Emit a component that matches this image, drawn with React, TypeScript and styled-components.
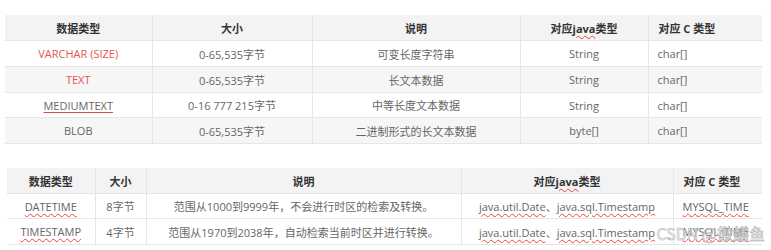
import { createGlobalStyle, styled } from 'styled-components';

const GlobalStyle = createGlobalStyle`
  html, body {
    margin: 0;
    padding: 0;
    background: #ffffff;
  }
  body {
    font-family: "Open Sans", "Noto Sans CJK SC", sans-serif;
  }
`

const Page = styled.div`
  position: relative;
  width: 771px;
  height: 250px;
  padding: 15px 9px 0 5px;
  box-sizing: border-box;
  display: flex;
  flex-direction: column;
  gap: 24px;
  overflow: hidden;
`

const Table = styled.table<{ $width: number; $indent?: number }>`
  width: ${p => p.$width}px;
  margin-left: ${p => p.$indent || 0}px;
  border-collapse: collapse;
  table-layout: fixed;
  font-size: 11px;
  color: #666;
`

const HeadCell = styled.th<{ $left?: boolean }>`
  height: 25px;
  padding: 0 0 0 ${p => (p.$left ? '10px' : '0')};
  background: #f3f3f3;
  color: #333;
  font-weight: 700;
  text-align: ${p => (p.$left ? 'left' : 'center')};
  border-left: 1px solid #e6e6e6;
  border-bottom: 1px solid #e6e6e6;
  &:first-child {
    border-left: none;
  }
`

const Row = styled.tr<{ $shade?: boolean }>`
  background: ${p => (p.$shade ? '#f6f6f6' : '#ffffff')};
`

const Cell = styled.td<{ $left?: boolean; $h?: number }>`
  height: ${p => p.$h || 25}px;
  padding: 0 0 0 ${p => (p.$left ? '9px' : '0')};
  text-align: ${p => (p.$left ? 'left' : 'center')};
  border-left: 1px solid #e6e6e6;
  border-bottom: 1px solid #e6e6e6;
  white-space: nowrap;
  &:first-child {
    border-left: none;
  }
`

const Red = styled.span`
  color: #e4574f;
`

const Spell = styled.span<{ $straight?: boolean }>`
  text-decoration-line: underline;
  text-decoration-style: ${p => (p.$straight ? 'solid' : 'wavy')};
  text-decoration-color: #e8453c;
  text-decoration-thickness: 1px;
  text-underline-offset: 2px;
`

const Watermark = styled.div`
  position: absolute;
  right: 6px;
  bottom: 5px;
  font-family: "Noto Sans CJK SC", sans-serif;
  font-size: 16px;
  color: rgba(255, 255, 255, 0.8);
  -webkit-text-stroke: 0.5px #a0a0a0;
`

const types = [
  { name: 'VARCHAR (SIZE)', red: true, size: '0-65,535字节', desc: '可变长度字符串', java: 'String', h: 25 },
  { name: 'TEXT', red: true, size: '0-65,535字节', desc: '长文本数据', java: 'String', h: 25 },
  { name: 'MEDIUMTEXT', spell: true, size: '0-16 777 215字节', desc: '中等长度文本数据', java: 'String', h: 24 },
  { name: 'BLOB', size: '0-65,535字节', desc: '二进制形式的长文本数据', java: 'byte[]', h: 25 },
]

const times = [
  { name: 'DATETIME', size: '8字节', desc: '范围从1000到9999年，不会进行时区的检索及转换。', h: 24 },
  { name: 'TIMESTAMP', size: '4字节', desc: '范围从1970到2038年，自动检索当前时区并进行转换。', h: 25 },
]

function App() {
  return (
    <Page>
      <GlobalStyle />
      <Table $width={757}>
        <colgroup>
          <col style={{ width: 147 }} />
          <col style={{ width: 160 }} />
          <col style={{ width: 208 }} />
          <col style={{ width: 128 }} />
          <col style={{ width: 114 }} />
        </colgroup>
        <thead>
          <tr>
            <HeadCell>数据类型</HeadCell>
            <HeadCell>大小</HeadCell>
            <HeadCell>说明</HeadCell>
            <HeadCell>对应<Spell>java</Spell>类型</HeadCell>
            <HeadCell $left>对应 C 类型</HeadCell>
          </tr>
        </thead>
        <tbody>
          {types.map((t, i) => (
            <Row key={t.name} $shade={i % 2 === 1}>
              <Cell $h={t.h}>
                {t.red ? <Red>{t.name}</Red> : t.spell ? <Spell $straight>{t.name}</Spell> : t.name}
              </Cell>
              <Cell $h={t.h}>{t.size}</Cell>
              <Cell $h={t.h}>{t.desc}</Cell>
              <Cell $h={t.h}>{t.java}</Cell>
              <Cell $h={t.h} $left>char[]</Cell>
            </Row>
          ))}
        </tbody>
      </Table>

      <Table $width={755} $indent={2}>
        <colgroup>
          <col style={{ width: 88 }} />
          <col style={{ width: 51 }} />
          <col style={{ width: 315 }} />
          <col style={{ width: 212 }} />
          <col style={{ width: 89 }} />
        </colgroup>
        <thead>
          <tr>
            <HeadCell>数据类型</HeadCell>
            <HeadCell>大小</HeadCell>
            <HeadCell>说明</HeadCell>
            <HeadCell>对应<Spell>java</Spell>类型</HeadCell>
            <HeadCell $left>对应 C 类型</HeadCell>
          </tr>
        </thead>
        <tbody>
          {times.map(t => (
            <Row key={t.name}>
              <Cell $h={t.h}><Spell>{t.name}</Spell></Cell>
              <Cell $h={t.h}>{t.size}</Cell>
              <Cell $h={t.h}>{t.desc}</Cell>
              <Cell $h={t.h}>
                <Spell>java.util.Date</Spell>、<Spell>java.sql.Timestamp</Spell>
              </Cell>
              <Cell $h={t.h} $left><Spell>MYSQL_TIME</Spell></Cell>
            </Row>
          ))}
        </tbody>
      </Table>

      <Watermark>CSDN @微鳝鱼</Watermark>
    </Page>
  );
}

export default App;
